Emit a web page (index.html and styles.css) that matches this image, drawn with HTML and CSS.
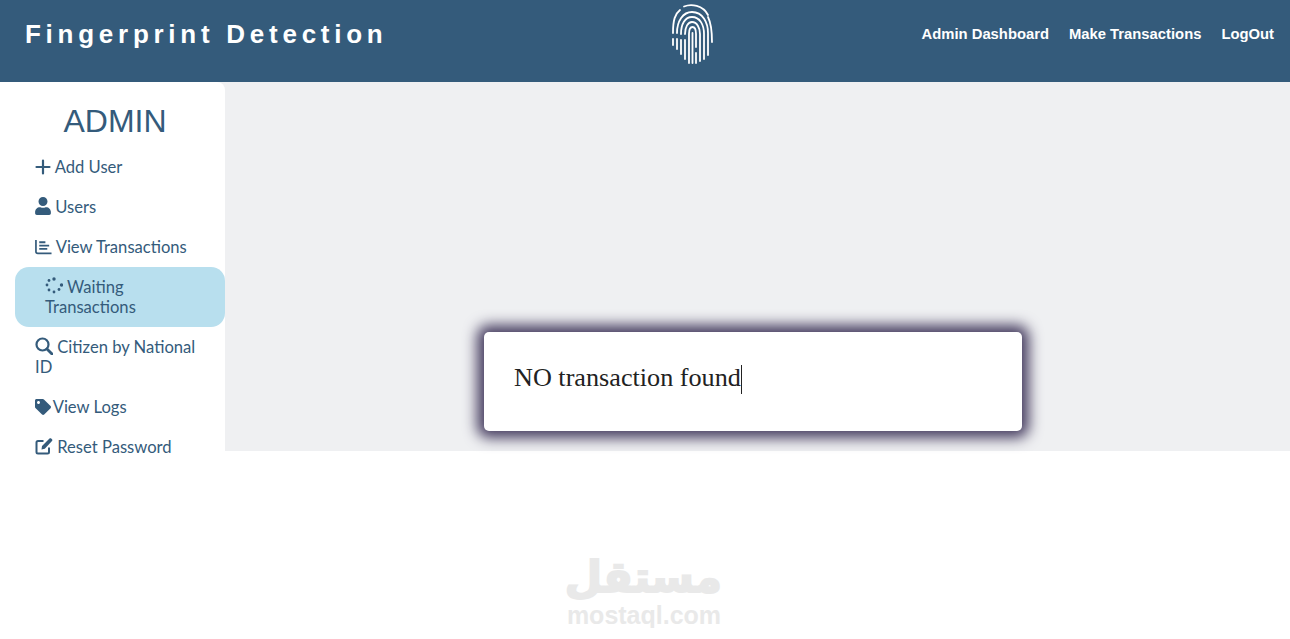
FILE: index.html
```html
<!DOCTYPE html>
<html lang="en">
<head>
<meta charset="UTF-8" />
<title>Fingerprint Detection</title>
<link rel="stylesheet" href="styles.css">
</head>
<body>

<header class="topbar">
  <div class="brand">Fingerprint Detection</div>
  <svg class="print" viewBox="0 0 44 62" fill="none" stroke="#fff" stroke-width="1.800" stroke-linecap="round">
    <path d="M14 3.500C21 .5 33 2 38 12"/>
    <path d="M10 7C5 11 3 17 3 30"/>
    <path d="M38 14C41 20 42 28 42 39"/>
    <path d="M3 36V42"/>
    <path d="M7 30C7 18 13 9 22 9C33 9 38 20 38 30V52"/>
    <path d="M11 31C11 21 15 14 22 14C30 14 34 22 34 31V56"/>
    <path d="M7 36V46"/>
    <path d="M11 37V51"/>
    <path d="M15 31C15 24 18 19 22 19C27 19 30 25 30 31V58"/>
    <path d="M15 37V56"/>
    <path d="M19 60V31C19 26 20 24 22.500 24C25 24 26 27 26 31V44"/>
    <path d="M26 50V60"/>
    <path d="M22.500 30V60"/>
  </svg>
  <nav class="topnav">
    <a href="#">Admin Dashboard</a>
    <a href="#">Make Transactions</a>
    <a href="#">LogOut</a>
  </nav>
</header>

<div class="wrap">
  <aside class="sidebar">
    <h2>ADMIN</h2>
    <a class="item" href="#">
      <svg class="ico" viewBox="0 0 16 16" width="16" height="16"><path d="M8 1.500V14.500M1.500 8H14.500" stroke="currentColor" stroke-width="2.200" stroke-linecap="round" fill="none"/></svg>
      Add User</a>
    <a class="item" href="#">
      <svg class="ico" viewBox="0 0 448 512" width="16" height="18"><path d="M224 256c70.700 0 128-57.300 128-128S294.700 0 224 0 96 57.300 96 128s57.300 128 128 128zm89.600 32h-16.700c-22.200 10.200-46.900 16-72.900 16s-50.600-5.800-72.900-16h-16.700C60.200 288 0 348.200 0 422.400V464c0 26.500 21.500 48 48 48h352c26.500 0 48-21.500 48-48v-41.600c0-74.200-60.200-134.400-134.400-134.400z"/></svg>
      Users</a>
    <a class="item" href="#">
      <svg class="ico" viewBox="0 0 18 16" width="17" height="16"><path d="M1 0.500V13C1 14 1.500 14.700 3 14.700H17.500" stroke="currentColor" stroke-width="1.800" fill="none"/><path d="M4.500 3H11M4.500 6.500H15M4.500 10H13" stroke="currentColor" stroke-width="2" fill="none"/></svg>
      View Transactions</a>
    <a class="item active" href="#">
      <svg class="ico" viewBox="0 0 18 18" width="18" height="18"><circle cx="9" cy="2" r="1.700"/><circle cx="4" cy="3.500" r="1.400"/><circle cx="2" cy="8" r="1.400"/><circle cx="4" cy="13" r="1.400"/><circle cx="9" cy="15" r="1.400"/><circle cx="14" cy="12.500" r="1.400"/><circle cx="16.500" cy="8" r="1.700"/></svg>
      Waiting Transactions</a>
    <a class="item" href="#">
      <svg class="ico" viewBox="0 0 18 18" width="18" height="18"><circle cx="7.500" cy="7.500" r="6" stroke="currentColor" stroke-width="2.200" fill="none"/><path d="M12 12L17 17" stroke="currentColor" stroke-width="2.800" stroke-linecap="round"/></svg>
      Citizen by National ID</a>
    <a class="item tag" href="#">
      <svg class="ico" viewBox="0 0 512 512" width="16" height="16"><path d="M0 252.118V48C0 21.490 21.490 0 48 0h204.118a48 48 0 0 1 33.941 14.059l211.882 211.882c18.745 18.745 18.745 49.137 0 67.882L293.823 497.941c-18.745 18.745-49.137 18.745-67.882 0L14.059 286.059A48 48 0 0 1 0 252.118zM112 64c-26.510 0-48 21.490-48 48s21.490 48 48 48 48-21.490 48-48-21.490-48-48-48z"/></svg>
      View Logs</a>
    <a class="item" href="#">
      <svg class="ico" viewBox="0 0 18 18" width="18" height="18"><path d="M14 10.500V15C14 16 13.300 16.500 12.500 16.500H3C2 16.500 1.500 16 1.500 15V5.500C1.500 4.500 2 4 3 4H8.500" stroke="currentColor" stroke-width="2" fill="none"/><path d="M6.500 12.500L7 9L14.500 1.500C15 1 15.700 1 16.200 1.500L17 2.300C17.500 2.800 17.500 3.500 17 4L9.800 11.800Z"/></svg>
      Reset Password</a>
  </aside>

  <main class="content">
    <div class="card">NO transaction found<span class="caret"></span></div>
  </main>
</div>

<footer class="mark">
  <div class="mark-ar" lang="ar" dir="rtl">مستقل</div>
  <div class="mark-en">mostaql.com</div>
</footer>

</body>
</html>
```

FILE: styles.css
```css
body {
  margin: 0;
  background-color: #fff;
  overflow: hidden;
}
.topbar {
  height: 82px;
  background-color: #345b7b;
  display: flex;
  align-items: flex-start;
  color: #fff;
  position: relative;
}
.brand {
  font-family: "Liberation Sans", sans-serif;
  font-weight: 700;
  font-size: 26px;
  letter-spacing: 4.74px;
  line-height: 30px;
  margin: 19px 0 0 25px;
}
.print {
  position: absolute;
  left: 670px;
  top: 3px;
  width: 44px;
  height: 62px;
}
.topnav {
  margin-left: auto;
  display: flex;
  gap: 20px;
  padding: 25px 16px 0 0;
}
.topnav a {
  font-family: "Liberation Sans", sans-serif;
  font-weight: 700;
  font-size: 14.8px;
  line-height: 18px;
  color: #fff;
  text-decoration: none;
}
.wrap {
  display: flex;
  height: 369px;
  background-color: #eff0f2;
}
.sidebar {
  width: 225px;
  flex: none;
  box-sizing: border-box;
  background-color: #fff;
  border-top-right-radius: 8px;
  padding-left: 15px;
}
.sidebar h2 {
  font-family: "Liberation Sans", sans-serif;
  font-weight: 400;
  font-size: 32px;
  line-height: 37px;
  color: #345b7b;
  text-align: center;
  margin: 21px 10px 7px 0;
}
.item {
  display: block;
  padding: 10px 20px;
  font-family: Lato, sans-serif;
  font-size: 16.6px;
  line-height: 20px;
  color: #345b7b;
  text-decoration: none;
}
.item.active {
  background-color: #b8dfee;
  border-radius: 14px;
  padding-left: 30px;
}
.ico {
  fill: currentColor;
  vertical-align: -2px;
}
.item.tag .ico {
  margin-right: -2px;
}
.content {
  flex: 1;
  display: flex;
  align-items: flex-end;
  padding-bottom: 20px;
}
.card {
  width: 538px;
  height: 99px;
  box-sizing: border-box;
  margin-left: 259px;
  padding: 31px 30px 0;
  background-color: #fff;
  border-radius: 5px;
  box-shadow: 0 0 14px 7px #463d60;
  font-family: "Liberation Serif", serif;
  font-size: 26.2px;
  line-height: 30px;
  color: #222;
}
.caret {
  display: inline-block;
  width: 1px;
  height: 29px;
  background-color: #222;
  vertical-align: middle;
}
.mark {
  margin-top: 101px;
  text-align: center;
  width: 156px;
  margin-left: 566px;
  color: #e9e9e9;
  font-weight: 700;
}
.mark-ar {
  font-family: "DejaVu Sans", sans-serif;
  font-size: 43px;
  line-height: 50px;
  -webkit-text-stroke: 2px #e9e9e9;
}
.mark-en {
  font-family: "Liberation Sans", sans-serif;
  font-size: 25px;
  line-height: 26px;
}
```
